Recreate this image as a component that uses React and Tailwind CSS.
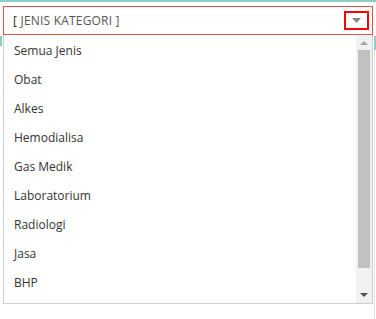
export default function App() {
  const items = ['Semua Jenis', 'Obat', 'Alkes', 'Hemodialisa', 'Gas Medik', 'Laboratorium', 'Radiologi', 'Jasa', 'BHP'];
  return (
    <div className="relative w-[376px] h-[319px] bg-white overflow-hidden" style={{ fontFamily: '"Open Sans", sans-serif' }}>
      {/* page behind the open select */}
      <div className="absolute top-0 left-0 right-0 h-[2px] bg-[#8ccdc5]" />
      <div className="absolute top-[36px] left-0 w-[2px] h-[10px] bg-[#8ccdc5]" />
      <div className="absolute top-[36px] right-0 w-[2px] h-[14px] bg-[#8ccdc5]" />
      <div className="absolute top-[50px] right-[1px] w-px bottom-0 bg-[#e3e3e3]" />

      <div className="relative px-[3px] pt-[6px]">
        <div className="flex items-center h-[29px] border border-[#d9534f] bg-white pl-[9px] pr-[3px]">
          <span className="flex-1 text-[12px] text-[#555] tracking-[0.2px]">
            <span className="text-[#222]">[</span> JENIS KATEGORI ]
          </span>
          <div className="flex items-center justify-center w-[25px] h-[19px] border-2 border-[#ff0000] bg-white">
            <svg width="9" height="5" viewBox="0 0 9 5">
              <path d="M0 0H9L4.5 5Z" fill="#888" />
            </svg>
          </div>
        </div>

        <div className="flex h-[269px] w-[370px] border border-t-0 border-[#cfcfcf] bg-white">
          <ul className="flex-1 pt-px">
            {items.map((it) => (
              <li key={it} className="h-[29px] flex items-center pl-[10px] text-[12px] text-[#333]">
                {it}
              </li>
            ))}
          </ul>
          <div className="flex flex-col w-[16px] bg-[#f1f1f1]">
            <div className="h-[15px] flex items-center justify-center">
              <svg width="8" height="4" viewBox="0 0 8 4">
                <path d="M0 4H8L4 0Z" fill="#a3a3a3" />
              </svg>
            </div>
            <div className="mx-[2px] h-[218px] bg-[#c1c1c1]" />
            <div className="flex-1" />
            <div className="h-[17px] flex items-center justify-center">
              <svg width="8" height="4" viewBox="0 0 8 4">
                <path d="M0 0H8L4 4Z" fill="#505050" />
              </svg>
            </div>
          </div>
        </div>
      </div>
    </div>
  );
}
